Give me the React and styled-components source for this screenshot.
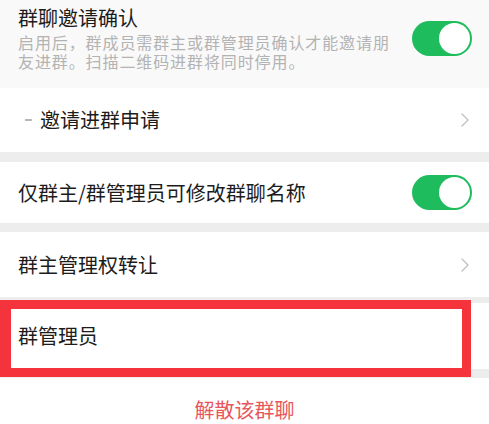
import React from "react";
import styled, { createGlobalStyle } from "styled-components";

const Global = createGlobalStyle`
  html, body { margin: 0; padding: 0; background: #ffffff; }
  body { font-family: "Noto Sans CJK SC", "Noto Sans", sans-serif; }
  * { box-sizing: border-box; }
`;

const Page = styled.div`
  width: 489px;
  height: 424px;
  overflow: hidden;
  background: #ffffff;
  display: flex;
  flex-direction: column;
`;

const Row = styled.div`
  position: relative;
  display: flex;
  align-items: ${(p) => (p.$top ? "flex-start" : "center")};
  justify-content: space-between;
  height: ${(p) => p.$h}px;
  padding: ${(p) => (p.$top ? "7px 17px 0 18px" : "0 17px 0 18px")};
  background: ${(p) => p.$bg || "#ffffff"};
  flex-shrink: 0;
`;

const TextBlock = styled.div`
  display: flex;
  flex-direction: column;
  width: 380px;
`;

const Title = styled.div`
  font-size: 20px;
  line-height: 22px;
  color: #1c1c1c;
  display: flex;
  align-items: center;
`;

const Desc = styled.div`
  margin-top: 4px;
  font-size: 16px;
  letter-spacing: 0.9px;
  line-height: 19px;
  color: #b3b3b3;
`;

const Dash = styled.span`
  display: inline-block;
  width: 7px;
  height: 1.5px;
  background: #b8b8b8;
  margin-left: 7px;
  margin-right: 8px;
`;

const Toggle = styled.div`
  width: 60px;
  height: 35px;
  border-radius: 18px;
  background: #1fbc5e;
  position: relative;
  flex-shrink: 0;
  margin-top: ${(p) => p.$mt || 0}px;
  &::after {
    content: "";
    position: absolute;
    right: 2px;
    top: 2px;
    width: 31px;
    height: 31px;
    border-radius: 50%;
    background: #ffffff;
  }
`;

const Band = styled.div`
  height: ${(p) => p.$h}px;
  background: #ededed;
  flex-shrink: 0;
`;

const Highlight = styled.div`
  position: absolute;
  top: -3px;
  left: 0;
  right: 18px;
  bottom: -8px;
  border: 9px solid #f4333c;
  border-left-width: 11px;
  pointer-events: none;
`;

const Danger = styled.div`
  flex: 1;
  display: flex;
  justify-content: center;
  align-items: flex-start;
  padding-top: 20px;
  font-size: 20px;
  line-height: 24px;
  color: #e8565c;
`;

const Chevron = () => (
  <svg width="10" height="16" viewBox="0 0 10 16" style={{ marginRight: 2 }}>
    <path d="M2 2 L8 8 L2 14" fill="none" stroke="#c2c2c2" strokeWidth="1.4" strokeLinecap="round" strokeLinejoin="round" />
  </svg>
);

export default function App() {
  return (
    <>
      <Global />
      <Page>
        <Row $h={88} $top $bg="#f9f9f9">
          <TextBlock>
            <Title>群聊邀请确认</Title>
            <Desc>启用后，群成员需群主或群管理员确认才能邀请朋友进群。扫描二维码进群将同时停用。</Desc>
          </TextBlock>
          <Toggle $mt={14} />
        </Row>
        <Row $h={64}>
          <Title>
            <Dash />
            邀请进群申请
          </Title>
          <Chevron />
        </Row>
        <Band $h={10} />
        <Row $h={61}>
          <Title>仅群主/群管理员可修改群聊名称</Title>
          <Toggle />
        </Row>
        <Band $h={9} />
        <Row $h={65}>
          <Title>群主管理权转让</Title>
          <Chevron />
        </Row>
        <Band $h={6} />
        <Row $h={66}>
          <Title>群管理员</Title>
          <Highlight />
        </Row>
        <Band $h={9} />
        <Danger>解散该群聊</Danger>
      </Page>
    </>
  );
}
